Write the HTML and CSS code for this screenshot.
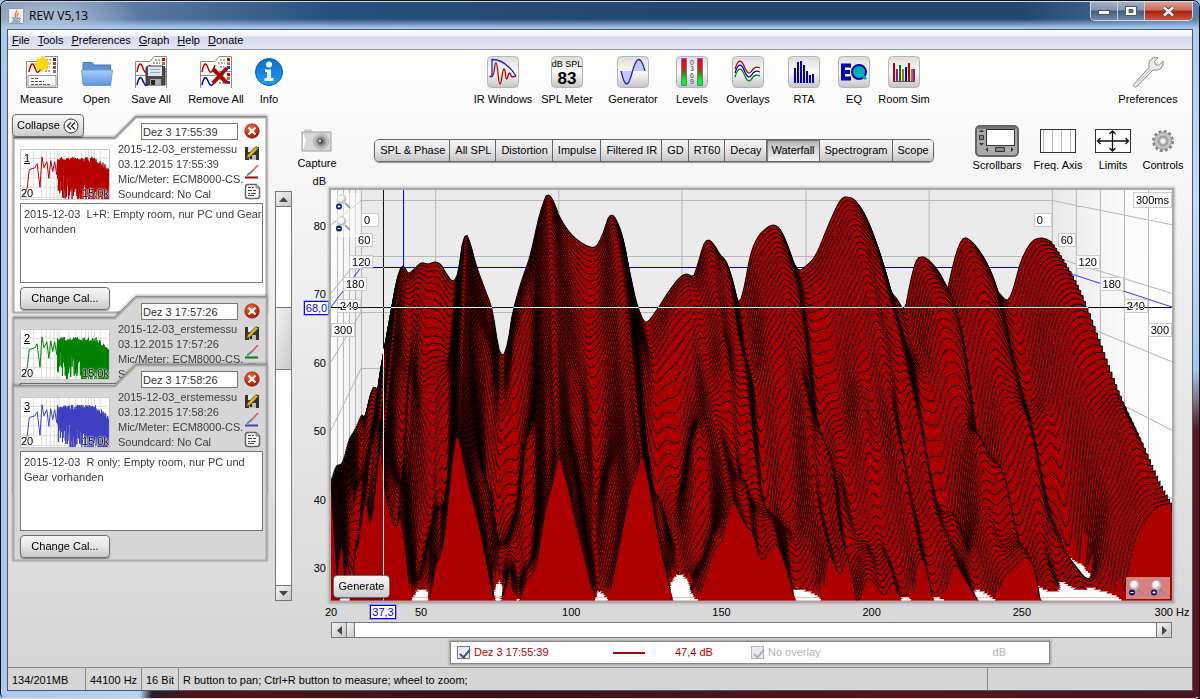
FILE: index.html
```html
<!DOCTYPE html>
<html lang="en">
<head>
  <meta charset="UTF-8">
  <meta name="viewport" content="width=device-width, initial-scale=1.0">
  <title>REW V5,13</title>
  <link rel="stylesheet" href="styles.css">
</head>
<body>
  <!-- shared icons -->
  <svg class="defs" width="0" height="0">
    <defs>
      <linearGradient id="tile" x1="0" y1="0" x2="0" y2="1">
        <stop offset="0" stop-color="#dcdcdc"/><stop offset="0.5" stop-color="#fafafa"/><stop offset="1" stop-color="#c4c4c4"/>
      </linearGradient>
      <linearGradient id="level" x1="0" y1="0" x2="0" y2="1">
        <stop offset="0.2" stop-color="#f00"/><stop offset="0.5" stop-color="#7a5a00"/><stop offset="0.8" stop-color="#0f0"/>
      </linearGradient>
      <linearGradient id="folder" x1="0" y1="0" x2="0" y2="1">
        <stop offset="0" stop-color="#a9cdfb"/><stop offset="1" stop-color="#5d95dd"/>
      </linearGradient>
      <linearGradient id="blueball" x1="0" y1="0" x2="0" y2="1">
        <stop offset="0" stop-color="#0d6fc8"/><stop offset="1" stop-color="#1e9bf5"/>
      </linearGradient>
      <radialGradient id="redball" cx="0.4" cy="0.3" r="0.8">
        <stop offset="0" stop-color="#f0703c"/><stop offset="0.6" stop-color="#cc2a12"/><stop offset="1" stop-color="#8c1006"/>
      </radialGradient>
      <radialGradient id="lens">
        <stop offset="0" stop-color="#222"/><stop offset="0.35" stop-color="#777"/><stop offset="0.6" stop-color="#999"/><stop offset="1" stop-color="#ddd"/>
      </radialGradient>
      <radialGradient id="glass" cx="0.4" cy="0.4">
        <stop offset="0" stop-color="#fff"/><stop offset="0.7" stop-color="#eee"/><stop offset="1" stop-color="#bbb"/>
      </radialGradient>
      <linearGradient id="leftwall"><stop offset="0" stop-color="#fff"/><stop offset="1" stop-color="#ececec"/></linearGradient>
      <linearGradient id="rightwall"><stop offset="0" stop-color="#e9e9e9"/><stop offset="0.6" stop-color="#fafafa"/><stop offset="1" stop-color="#fff"/></linearGradient>
    </defs>
    <symbol id="icon-sheet" viewBox="0 0 32 32">
      <path d="M.5 31.500V5.500H15L19 .5H31.500V31.500Z" fill="#fff" stroke="#8a8a8a"/>
      <path d="M3 16C5 6 7 6 9 12S13 18 16 9" fill="none" stroke="#c00000" stroke-width="1.500"/>
      <path d="M20 4H25M18 7H25M20 11H24M19 15H25" stroke="#555" stroke-dasharray="2 1"/>
      <path d="M27 2h3v3h-3z" fill="#c00"/><path d="M27 6h3v3h-3z" fill="#654"/><path d="M27 10h3v3h-3z" fill="#c33"/><path d="M27 14h3v3h-3z" fill="#777"/>
    </symbol>
    <symbol id="icon-sheet2" viewBox="0 0 32 32">
      <path d="M.5 32V5.500H15L19 .5H31.500V32M.5 19.500H15L19 15.500H31" fill="#fff" stroke="#8a8a8a"/>
      <path d="M2 16C4 6 6 6 8 12S12 18 15 9" fill="none" stroke="#c00000" stroke-width="1.500"/>
      <path d="M2 29C4 20 6 20 8 25S12 32 15 24" fill="none" stroke="#0000b4" stroke-width="1.500"/>
      <path d="M20 4H25M18 7H25M20 11H24M19 19H25M19 23H25M19 27H25" stroke="#555" stroke-dasharray="2 1"/>
      <path d="M27 2h3v3h-3zM27 17h3v3h-3z" fill="#c00"/><path d="M27 6h3v3h-3zM27 21h3v3h-3z" fill="#b70"/><path d="M27 10h3v3h-3zM27 25h3v3h-3z" fill="#33c"/>
    </symbol>
    <symbol id="icon-close" viewBox="0 0 16 16">
      <circle cx="8" cy="8" r="7.300" fill="url(#redball)" stroke="#8e2a1c" stroke-width=".6"/>
      <path d="M5.200 5.200 10.800 10.800M10.800 5.200 5.200 10.800" stroke="#fff" stroke-width="2.200" stroke-linecap="round"/>
    </symbol>
    <symbol id="icon-saveedit" viewBox="0 0 16 16">
      <path d="M1 2H15V15H1Z" fill="#333"/><path d="M4 2H12V7H4Z" fill="#dfe6ea"/><path d="M5 10H12V15H5Z" fill="#bbb"/><path d="M6 11H8V14H6Z" fill="#222"/>
      <path d="M2.500 13.500 3.500 10 12 1.500 14.300 3.500 6 12Z" fill="#e3b420" stroke="#4a3a08" stroke-width=".8"/>
    </symbol>
    <symbol id="icon-pen" viewBox="0 0 16 16">
      <path d="M14 1 8 7.500" stroke="#e0574f" stroke-width="1.600"/><path d="M8.500 7 3 11.500" stroke="#6d7f96" stroke-width="1.800"/><path d="M1 13.500H14" stroke="currentColor" stroke-width="2"/>
    </symbol>
    <symbol id="icon-note" viewBox="0 0 17 17">
      <path d="M4 1.500H12L15.500 5V13Q15.500 15.500 13 15.500H4Q1.500 15.500 1.500 13V4Q1.500 1.500 4 1.500Z" fill="#fff" stroke="#666" stroke-width="1.500"/>
      <path d="M12 1.500V5H15.500" fill="#bbb" stroke="#777"/><path d="M4 4.500H7M8 4.500H10M4 7.500H8M9 7.500H12M4 10.500H6M7 10.500H12M4 12.500H10" stroke="#444"/>
    </symbol>
    <symbol id="icon-zoomin" viewBox="0 0 16 16">
      <path d="M9 9 14 14" stroke="#8a8a8a" stroke-width="1.500"/><circle cx="5.500" cy="5" r="4.500" fill="url(#glass)" stroke="#c4c4c4" stroke-width=".6"/>
      <circle cx="3" cy="12.500" r="3" fill="#002080"/><path d="M1.500 12.500H4.500M3 11V14" stroke="#fff"/>
    </symbol>
    <symbol id="icon-zoomout" viewBox="0 0 16 16">
      <path d="M9 9 14 14" stroke="#8a8a8a" stroke-width="1.500"/><circle cx="5.500" cy="5" r="4.500" fill="url(#glass)" stroke="#c4c4c4" stroke-width=".6"/>
      <circle cx="3" cy="12.500" r="3" fill="#002080"/><path d="M1.500 12.500H4.500" stroke="#fff"/>
    </symbol>
    <symbol id="card-shape" viewBox="0 0 256 198">
      <path d="M1.500 196.500V22.500H103L124 1.500H254.500V196.500Z" fill="currentColor" stroke="#aaa" stroke-width="2"/>
      <path d="M1 21.500H102.500L123.500 .5H255" fill="none" stroke="#8f8f8f" stroke-width="1"/>
    </symbol>
  </svg>

  <header class="titlebar">
    <svg class="java" width="16" height="16" viewBox="0 0 16 16"><rect x=".5" y=".5" width="15" height="15" rx="1" fill="#eceff2" stroke="#8d99a5"/><path d="M8 9C5 6.500 9.500 5 8.500 2M9.500 8.500C8 7 10 6 11 5" fill="none" stroke="#f07818" stroke-width="1.300"/><path d="M4 10H11.500M5 12H10.500M3.500 14H12M11.500 10Q14 10 11 12" fill="none" stroke="#4a7290"/></svg>
    <span class="title">REW V5,13</span>
    <div class="window-buttons">
      <button class="min" aria-label="Minimize"><svg width="12" height="10"><rect x=".5" y="4.500" width="11" height="4" fill="#fff" stroke="#555"/></svg></button>
      <button class="max" aria-label="Maximize"><svg width="12" height="10"><path d="M.5.5H11.500V9.500H.5ZM4 3.500V6.500H8V3.500Z" fill="#fff" fill-rule="evenodd" stroke="#555"/></svg></button>
      <button class="exit" aria-label="Close"><svg width="13" height="11"><path d="M2 1.500 11 9.500M11 1.500 2 9.500" stroke="#5a3030" stroke-width="4"/><path d="M2 1.500 11 9.500M11 1.500 2 9.500" stroke="#fff" stroke-width="2.500"/></svg></button>
    </div>
  </header>

  <main class="client">
    <nav class="menubar">
      <a href="#"><u>F</u>ile</a>
      <a href="#"><u>T</u>ools</a>
      <a href="#"><u>P</u>references</a>
      <a href="#"><u>G</u>raph</a>
      <a href="#"><u>H</u>elp</a>
      <a href="#"><u>D</u>onate</a>
    </nav>

    <div class="toolbar">
      <div class="group file-group">
        <button class="tool"><svg width="32" height="32"><use href="#icon-sheet"/><path d="M2 19.500H30V30H2Z" fill="#fff" stroke="#999"/><path d="M5 22.500H12M5 25.500H18M5 28.500H25" stroke="#555" stroke-dasharray="3 1"/><circle cx="16" cy="8" r="6" fill="#ffd800"/><path d="M16 0V16M8 8H24M10.500 2.500 21.500 13.500M21.500 2.500 10.500 13.500" stroke="#ffd800" stroke-width="2"/></svg>Measure</button>
        <button class="tool"><svg width="34" height="32" viewBox="0 0 34 32"><path d="M3 28V6.500H12L14 9H30.500V28Z" fill="#5f92cf" stroke="#4679b8"/><path d="M1.500 14H32.500L30.500 29.500H3.500Z" fill="url(#folder)" stroke="#6f9fdd"/></svg>Open</button>
        <button class="tool"><svg width="32" height="32"><use href="#icon-sheet2"/><path d="M11 11.500 13 10H28L30 12V29H11Z" fill="#4a4a4a" stroke="#333"/><path d="M13 10.500H27V20H13Z" fill="#dce8ef"/><path d="M15 13.500H25M15 16.500H25" stroke="#9ab"/><path d="M15 23H26V29H15Z" fill="#aaa"/><path d="M16 24H20V29H16Z" fill="#222"/></svg>Save All</button>
        <button class="tool"><svg width="32" height="32"><use href="#icon-sheet2"/><path d="M13 13 27 27M27 12 13 27" stroke="#a80808" stroke-width="4"/></svg>Remove All</button>
        <button class="tool"><svg width="32" height="32"><circle cx="16" cy="16" r="13.500" fill="url(#blueball)" stroke="#0b5fae"/><circle cx="16" cy="8.500" r="3" fill="#fff"/><path d="M12 13.500H18V22H20.500V25H11.500V22H14V16H12Z" fill="#fff"/></svg>Info</button>
      </div>
      <div class="group main-group">
        <button class="tool"><svg width="32" height="32"><rect class="tile" x=".5" y=".5" width="31" height="31" rx="4"/><path d="M2.500 20.500H5V3.500C15 3.500 22 9 29 20" fill="none" stroke="#2020c0" stroke-width="1.300"/><path d="M5 20C8 20 7 7 9 7S11 28 13 28 15 13 17 13 18 23 19.500 23 21 17 22.500 17 24 21 25 21L29 20" fill="none" stroke="#b00000" stroke-width="1.300"/></svg>IR Windows</button>
        <button class="tool"><svg width="32" height="32"><rect class="tile" x=".5" y=".5" width="31" height="31" rx="4"/><text x="16" y="11" class="spl-unit">dB SPL</text><text x="16" y="28" class="spl-value">83</text></svg>SPL Meter</button>
        <button class="tool"><svg width="32" height="32"><rect class="tile" x=".5" y=".5" width="31" height="31" rx="4"/><path d="M4 15C8 32 11 32 15 17S23-3 28 15Z" fill="#c4c8ff"/><path d="M4 15C8 32 11 32 15 17S23-3 28 15" fill="none" stroke="#2020c0" stroke-width="1.300"/></svg>Generator</button>
        <button class="tool"><svg width="32" height="32"><rect class="tile" x=".5" y=".5" width="31" height="31" rx="4"/><path d="M5.500 2.500H10.500V29.500H5.500ZM21.500 2.500H26.500V29.500H21.500Z" fill="url(#level)" stroke="#66d"/><g class="digits"><text x="16" y="9">0</text><text x="16" y="15">3</text><text x="16" y="22">6</text><text x="16" y="28">9</text></g></svg>Levels</button>
        <button class="tool"><svg width="32" height="32"><rect class="tile" x=".5" y=".5" width="31" height="31" rx="4"/><g fill="none" stroke-width="1.300"><path d="M3 13C6 3 9 3 12 10S17 20 21 13Q24 10 28 12" stroke="#b00000"/><path d="M3 17C6 7 9 7 12 14S17 24 21 17Q24 14 28 16" stroke="#0000c0"/><path d="M3 21C6 11 9 11 12 18S17 28 21 21Q24 18 28 20" stroke="#008000"/></g></svg>Overlays</button>
        <button class="tool"><svg width="32" height="32"><rect class="tile" x=".5" y=".5" width="31" height="31" rx="4"/><path d="M7 27V12M10 27V6M13 27V5M16 27V9M19 27V15M22 27V19M25 27V18" stroke="#0000b4" stroke-width="2"/></svg>RTA</button>
        <button class="tool"><svg width="32" height="32"><rect class="tile" x=".5" y=".5" width="31" height="31" rx="4"/><path d="M13 9.500H5V22.500H13M5 16H12" fill="none" stroke="#0000b4" stroke-width="4"/><circle cx="21" cy="16" r="7" fill="#00b0b0" stroke="#0000b4" stroke-width="2"/><path d="M22 17 28 23" stroke="#00b0b0" stroke-width="3"/></svg>EQ</button>
        <button class="tool"><svg width="32" height="32"><rect class="tile" x=".5" y=".5" width="31" height="31" rx="4"/><g stroke-width="2"><path d="M6 25V7M21 25V7" stroke="#b00000"/><path d="M9 25V13M26 25V13" stroke="#b000b0"/><path d="M12 25V9" stroke="#008000"/><path d="M15 25V13M24 25V13" stroke="#a08000"/><path d="M18 25V11" stroke="#0000c0"/></g><path d="M5 25.500H27" stroke="#555"/></svg>Room Sim</button>
      </div>
      <div class="group pref-group">
        <button class="tool"><svg width="32" height="32"><path d="M2 28 17 11.500Q16 5 20 2.500 23 .5 26 1.500L22.500 5.500 24 9 27.500 9 31 5Q32 9 29 12.500 26 15 21 14L5.500 30Q3.500 32 2 30.500 .5 29.500 2 28Z" fill="#e8e8e8" stroke="#8c8c8c"/><path d="M6 26 19 13" stroke="#bbb"/></svg>Preferences</button>
      </div>
    </div>

    <div class="workspace">
      <aside class="sidebar">
        <div class="measurements">
          <button class="btn collapse">Collapse <svg width="16" height="16"><circle cx="8" cy="8" r="7" fill="#fff" stroke="#333"/><path d="M8 4.500 4.500 8 8 11.500M12 4.500 8.500 8 12 11.500" fill="none" stroke="#222" stroke-width="1.300"/></svg></button>

          <section class="card selected red">
            <svg class="shape" viewBox="0 0 256 198"><use href="#card-shape"/></svg>
            <div class="card-head">
              <input class="name" type="text" value="Dez 3 17:55:39" aria-label="Measurement 1 name">
              <button class="icon" aria-label="Remove"><svg width="16" height="16"><use href="#icon-close"/></svg></button>
            </div>
            <div class="card-body">
              <div class="thumb"><svg viewBox="0 0 89 50"></svg><u>1</u><span>20</span><span>15,0k</span></div>
              <p>2015-12-03_erstemessu<br>03.12.2015 17:55:39<br>Mic/Meter: ECM8000-CS.<br>Soundcard: No Cal</p>
              <div class="card-icons">
                <button class="icon" aria-label="Save"><svg width="16" height="16"><use href="#icon-saveedit"/></svg></button>
                <button class="icon pen" aria-label="Trace colour"><svg width="16" height="16"><use href="#icon-pen"/></svg></button>
                <button class="icon" aria-label="Notes"><svg width="17" height="17"><use href="#icon-note"/></svg></button>
              </div>
            </div>
            <textarea aria-label="Notes 1">2015-12-03  L+R: Empty room, nur PC und Gear vorhanden</textarea>
            <button class="btn cal">Change Cal...</button>
          </section>

          <section class="card green">
            <svg class="shape" viewBox="0 0 256 198"><use href="#card-shape"/></svg>
            <div class="card-head">
              <input class="name" type="text" value="Dez 3 17:57:26" aria-label="Measurement 2 name">
              <button class="icon" aria-label="Remove"><svg width="16" height="16"><use href="#icon-close"/></svg></button>
            </div>
            <div class="card-body">
              <div class="thumb"><svg viewBox="0 0 89 50"></svg><u>2</u><span>20</span><span>15,0k</span></div>
              <p>2015-12-03_erstemessu<br>03.12.2015 17:57:26<br>Mic/Meter: ECM8000-CS.<br>Soundcard: No Cal</p>
              <div class="card-icons">
                <button class="icon" aria-label="Save"><svg width="16" height="16"><use href="#icon-saveedit"/></svg></button>
                <button class="icon pen" aria-label="Trace colour"><svg width="16" height="16"><use href="#icon-pen"/></svg></button>
                <button class="icon" aria-label="Notes"><svg width="17" height="17"><use href="#icon-note"/></svg></button>
              </div>
            </div>
            <textarea aria-label="Notes 2"></textarea>
          </section>

          <section class="card blue">
            <svg class="shape" viewBox="0 0 256 198"><use href="#card-shape"/></svg>
            <div class="card-head">
              <input class="name" type="text" value="Dez 3 17:58:26" aria-label="Measurement 3 name">
              <button class="icon" aria-label="Remove"><svg width="16" height="16"><use href="#icon-close"/></svg></button>
            </div>
            <div class="card-body">
              <div class="thumb"><svg viewBox="0 0 89 50"></svg><u>3</u><span>20</span><span>15,0k</span></div>
              <p>2015-12-03_erstemessu<br>03.12.2015 17:58:26<br>Mic/Meter: ECM8000-CS.<br>Soundcard: No Cal</p>
              <div class="card-icons">
                <button class="icon" aria-label="Save"><svg width="16" height="16"><use href="#icon-saveedit"/></svg></button>
                <button class="icon pen" aria-label="Trace colour"><svg width="16" height="16"><use href="#icon-pen"/></svg></button>
                <button class="icon" aria-label="Notes"><svg width="17" height="17"><use href="#icon-note"/></svg></button>
              </div>
            </div>
            <textarea aria-label="Notes 3">2015-12-03  R only: Empty room, nur PC und Gear vorhanden</textarea>
            <button class="btn cal">Change Cal...</button>
          </section>
        </div>

        <div class="scrollbar vertical">
          <button aria-label="Scroll up"><svg width="9" height="5"><path d="M0 5 4.500 0 9 5Z" fill="#444"/></svg></button>
          <div class="handle"></div>
          <button aria-label="Scroll down"><svg width="9" height="5"><path d="M0 0 4.500 5 9 0Z" fill="#444"/></svg></button>
        </div>
      </aside>

      <section class="graph">
        <div class="graph-bar">
          <button class="tool capture"><svg width="32" height="24"><path d="M4 1H10V4H4Z" fill="#ddd" stroke="#bbb"/><rect x="1" y="3" width="29" height="19" fill="#d8d8d8" stroke="#a0a0a0"/><path d="M2 4 5 12 2 21" fill="#fff"/><circle cx="20" cy="12.500" r="7.500" fill="url(#lens)" stroke="#aaa"/><circle cx="19" cy="12" r="1" fill="#fff"/></svg>Capture</button>
          <div class="tabs">
            <button>SPL &amp; Phase</button><button>All SPL</button><button>Distortion</button><button>Impulse</button><button>Filtered IR</button><button>GD</button><button>RT60</button><button>Decay</button><button class="active">Waterfall</button><button>Spectrogram</button><button>Scope</button>
          </div>
          <div class="group view-group">
            <button class="tool"><svg width="44" height="32"><rect x="1" y="1" width="42" height="30" rx="4" fill="#aaa" stroke="#666" stroke-width="2"/><path d="M3 3H41" stroke="#777" stroke-width="2"/><rect x="11.500" y="4.500" width="28" height="16" fill="#fff" stroke="#333"/><path d="M4 7 6.500 4.500 9 7ZM4 18 6.500 20.500 9 18ZM13 22V27L10.500 24.500ZM36 22V27L38.500 24.500Z" fill="#333"/><path d="M4.500 10.500H8.500V14.500H4.500ZM20.500 22.500H29.500V26.500H20.500Z" fill="#888" stroke="#333"/></svg>Scrollbars</button>
            <button class="tool"><svg width="36" height="32"><rect x=".5" y="4.500" width="35" height="23" fill="#fff" stroke="#333"/><path d="M3.500 5V27M12.500 5V27M21.500 5V27M30.500 5V27" stroke="#bbb"/></svg>Freq. Axis</button>
            <button class="tool"><svg width="36" height="32"><rect x=".5" y="4.500" width="35" height="23" fill="#fff" stroke="#333"/><path d="M2.500 16H33.500M17.500 6V26M5.500 13 2.500 16 5.500 19M30.500 13 33.500 16 30.500 19M14.500 9 17.500 6 20.500 9M14.500 23 17.500 26 20.500 23" fill="none" stroke="#111" stroke-width="1.300"/></svg>Limits</button>
            <button class="tool"><svg width="32" height="32"><circle cx="16" cy="16" r="9.500" fill="none" stroke="#888" stroke-width="3" stroke-dasharray="3 2"/><circle cx="16" cy="16" r="8.500" fill="#c4c4c4" stroke="#999"/><circle cx="16" cy="16" r="5" fill="#a8a8a8" stroke="#999"/><circle cx="16" cy="16" r="2.500" fill="#f6f6f6" stroke="#ddd"/></svg>Controls</button>
          </div>
        </div>

        <div class="chart">
          <div class="unit">dB</div>
          <div class="y-axis"><span>80</span><span>70</span><span>60</span><span>50</span><span>40</span><span>30</span><b class="y-cursor">68,0</b></div>
          <div class="plot" id="plot">
            <svg class="waterfall" id="waterfall" viewBox="331 190 840 411" preserveAspectRatio="none"></svg>
            <span class="range">300ms</span>
            <div class="zoom-v"><button class="icon" aria-label="Zoom in"><svg width="16" height="16"><use href="#icon-zoomin"/></svg></button><button class="icon" aria-label="Zoom out"><svg width="16" height="16"><use href="#icon-zoomout"/></svg></button></div>
            <div class="zoom-h"><button class="icon" aria-label="Zoom out"><svg width="16" height="16"><use href="#icon-zoomout"/></svg></button><button class="icon" aria-label="Zoom in"><svg width="16" height="16"><use href="#icon-zoomin"/></svg></button></div>
            <i class="cross-h"></i><i class="cross-v"></i>
            <button class="btn generate">Generate</button>
          </div>
          <div class="x-axis"><span>20</span><span>50</span><span>100</span><span>150</span><span>200</span><span>250</span><span>300 Hz</span><b class="x-cursor">37,3</b></div>
          <div class="scrollbar horizontal">
            <button aria-label="Scroll left"><svg width="5" height="9"><path d="M5 0 0 4.500 5 9Z" fill="#444"/></svg></button>
            <div class="handle"></div>
            <button aria-label="Scroll right"><svg width="5" height="9"><path d="M0 0 5 4.500 0 9Z" fill="#444"/></svg></button>
          </div>
        </div>

        <div class="legend">
          <label class="trace"><input type="checkbox" checked>Dez 3 17:55:39</label>
          <i class="swatch"></i>
          <span class="value">47,4 dB</span>
          <label class="off"><input type="checkbox" checked disabled>No overlay</label>
          <span class="off-unit">dB</span>
        </div>
      </section>
    </div>

    <footer class="statusbar">
      <span class="mem">134/201MB</span>
      <span class="rate">44100 Hz</span>
      <span class="bits">16 Bit</span>
      <span class="hint">R button to pan; Ctrl+R button to measure; wheel to zoom;</span>
      <span class="end"></span>
    </footer>
  </main>
  <script src="waterfall.js"></script>
</body>
</html>
```
FILE: styles.css
```css
* {
  box-sizing: border-box;
}

body {
  margin: 0;
  min-height: 100vh;
  display: flex;
  flex-direction: column;
  padding: 0 6px 7px;
  font-family: "Liberation Sans", Arial, sans-serif;
  font-size: 11px;
  line-height: 15px;
  color: #000;
  border: 1px solid #111;
  border-bottom-color: #e8d8d8;
  border-radius: 7px 7px 6px 6px;
  background:
    linear-gradient(to right, #a9c9ee 0, #b5d3f4 140px, #2a1a28 152px, #55121c 200px, #3a1018 500px, #5a1420 900px, #4a1420 100%) bottom / 100% 8px no-repeat,
    linear-gradient(to bottom, #a9c9ee 0, #c4dcf4 200px, #a4c8ee 370px, #5a1820 430px, #5a1420 100%) right / 7px 100% no-repeat,
    #a9c9ee;
}

button {
  font: inherit;
  color: inherit;
  margin: 0;
  padding: 0;
  border: 0;
  background: none;
}

.defs {
  position: absolute;
}

/* title bar */
.titlebar {
  height: 28px;
  flex: none;
  margin: 0 -6px;
  display: flex;
  align-items: center;
  padding-left: 7px;
  border-radius: 6px 6px 0 0;
  background:
    radial-gradient(ellipse 90px 30px at 50px 14px, rgba(190, 205, 225, 0.8), transparent),
    linear-gradient(to bottom, transparent 17px, #a9c9ee 26px),
    linear-gradient(to right, #7d93b0 0, #5f7fa8 110px, #28507c 330px, #22466e 60%, #22466e 85%, #5a80ac 100%);
  border-top: 1px solid #cfdcec;
}

.title {
  font-family: "Open Sans", "Noto Sans", sans-serif;
  font-size: 12px;
  margin-left: 5px;
  flex: 1;
}

.window-buttons {
  display: flex;
  align-self: flex-start;
  margin-right: 6px;
  border: 1px solid #d0dbe8;
  border-top: 0;
  border-radius: 0 0 5px 5px;
  overflow: hidden;
}

.window-buttons button {
  height: 18px;
  width: 27px;
  border-right: 1px solid #c4d0de;
  background: linear-gradient(to bottom, #a3b3c6 0, #8295ad 45%, #405a7a 50%, #6f88a6 100%);
}

.window-buttons .exit {
  width: 47px;
  border: 0;
  background: linear-gradient(to bottom, #dba196 0, #cc6a58 45%, #a8200c 50%, #c8563e 100%);
}

.window-buttons svg {
  display: block;
  margin: 0 auto;
}

/* client area */
.client {
  flex: 1;
  display: flex;
  flex-direction: column;
  border: 1px solid #4b5a6b;
  background: linear-gradient(to bottom, #fff 0, #fbfbfb 80px, #d8d8d8 90%, #d6d6d6 100%);
}

.menubar {
  display: flex;
  gap: 8px;
  height: 20px;
  padding: 2px 4px;
  border-bottom: 1px solid #9a9aa2;
  background: linear-gradient(to bottom, #fff 0, #f0f3fa 6px, #d5dbed 7px, #e2e7f5 100%);
}

.menubar a {
  color: #000;
  text-decoration: none;
  line-height: 17px;
}

.toolbar {
  display: flex;
  justify-content: space-between;
  height: 62px;
  padding: 6px 11px 0 5px;
}

.group {
  display: grid;
  align-items: start;
}

.file-group {
  grid-template-columns: 57px 53px 56px 74px 32px;
}

.main-group {
  grid-template-columns: 64px 64px 68px 50px 62px 50px 50px 50px;
}

.pref-group {
  grid-template-columns: 66px;
}

.view-group {
  grid-template-columns: 62px 60px 50px 50px;
}

.tool {
  display: flex;
  flex-direction: column;
  align-items: center;
  gap: 4px;
  white-space: nowrap;
}

.tile {
  fill: url(#tile);
  stroke: #b4b4b4;
}

.spl-unit {
  font-size: 9px;
  text-anchor: middle;
}

.spl-value {
  font-size: 17px;
  font-weight: bold;
  text-anchor: middle;
}

.digits {
  font-size: 7px;
  text-anchor: middle;
  fill: #444;
}

.workspace {
  flex: 1;
  display: grid;
  grid-template-columns: 284px 1fr;
}

.btn {
  height: 23px;
  border: 1px solid #6d6d6d;
  border-radius: 4px;
  background: linear-gradient(to bottom, #f6f6f6, #e6e6e6 50%, #c9c9c9);
  box-shadow: 0 1px 1px rgba(0, 0, 0, 0.4);
}

.icon {
  display: block;
  height: 16px;
}

.icon svg {
  display: block;
}

/* measurement list */
.sidebar {
  display: flex;
  justify-content: space-between;
  padding: 2px 0 0 4px;
}

.measurements {
  position: relative;
  z-index: 0;
}

.collapse {
  display: flex;
  align-items: center;
  justify-content: space-between;
  width: 72px;
  padding: 0 4px;
  margin-bottom: -21px;
}

.card {
  position: relative;
  width: 256px;
  height: 198px;
  padding: 7px 8px 0;
  color: #d6d6d6;
  filter: drop-shadow(0 -1px 1px rgba(0, 0, 0, 0.3));
}

.card.selected {
  color: #fff;
  margin-bottom: -18px;
  z-index: -1;
}

.card.green {
  margin-bottom: -130px;
}

.shape {
  position: absolute;
  inset: 0;
  width: 100%;
  height: 100%;
}

.card-head {
  position: relative;
  display: flex;
  justify-content: flex-end;
  gap: 6px;
}

.name {
  width: 97px;
  height: 17px;
  padding: 0 1px;
  border: 1px solid #777;
  font: inherit;
  color: #333;
}

.card-body {
  position: relative;
  display: grid;
  grid-template-columns: 90px 134px 17px;
  margin-top: 2px;
  height: 61px;
  color: #3c3c3c;
}

.card-body p {
  margin: 0;
  padding-left: 8px;
  white-space: nowrap;
}

.thumb {
  position: relative;
  width: 90px;
  height: 51px;
  margin-top: 7px;
  border: 1px solid #c8c8c8;
  background: #fff;
  color: #000;
}

.thumb svg {
  display: block;
  width: 100%;
  height: 100%;
}

.thumb u,
.thumb span {
  position: absolute;
  bottom: -2px;
  left: 0;
  text-shadow: 0 0 1px #fff, 0 0 2px #fff, 0 0 2px #fff;
}

.thumb u {
  top: 1px;
  left: 3px;
}

.thumb span:last-child {
  left: auto;
  right: 0;
}

.thumb path {
  fill: none;
  stroke: currentColor;
}

.red .thumb svg, .red .pen {
  color: #b40000;
}

.green .thumb svg, .green .pen {
  color: #008000;
}

.blue .thumb svg, .blue .pen {
  color: #4040c0;
}

.card-icons {
  display: flex;
  flex-direction: column;
  gap: 3px;
  padding-top: 3px;
}

textarea {
  position: relative;
  display: block;
  width: 243px;
  height: 80px;
  padding: 3px 0 3px 3px;
  margin: 0 0 4px;
  border: 1px solid #777;
  resize: none;
  overflow: hidden;
  font: inherit;
  color: #3c3c3c;
}

.cal {
  position: relative;
  display: block;
  width: 90px;
  color: #000;
}

/* scrollbars */
.scrollbar {
  display: flex;
  border: 1px solid #777;
  background: #fff;
}

.scrollbar button,
.handle {
  flex: none;
  display: flex;
  align-items: center;
  justify-content: center;
  background: linear-gradient(to bottom right, #f4f4f4, #c8c8c8);
}

.vertical {
  flex-direction: column;
  width: 17px;
  margin: 77px 0 66px;
}

.vertical button {
  height: 15px;
  border-bottom: 1px solid #777;
}

.vertical button:last-child {
  border-top: 1px solid #777;
  border-bottom: 0;
  margin-top: auto;
}

.vertical .handle {
  height: 63px;
  margin-top: 100px;
  border: solid #777;
  border-width: 1px 0;
}

.horizontal {
  grid-column: 2;
  grid-row: 4;
}

.horizontal button {
  width: 15px;
  border-right: 1px solid #777;
}

.horizontal button:last-child {
  border-left: 1px solid #777;
  border-right: 0;
  margin-left: auto;
}

.horizontal .handle {
  width: 8px;
  border-right: 1px solid #777;
}

/* graph */
.graph {
  display: flex;
  flex-direction: column;
}

.graph-bar {
  display: flex;
  justify-content: space-between;
  align-items: flex-start;
  height: 62px;
  padding: 13px 4px 0 0;
}

.graph-bar .tool {
  gap: 1px;
}

.graph-bar .capture {
  width: 50px;
  padding-top: 4px;
  gap: 3px;
}

.tabs {
  display: flex;
  height: 23px;
  margin-top: 14px;
  border: 1px solid #666;
  border-radius: 5px;
  overflow: hidden;
  box-shadow: 0 1px 1px rgba(0, 0, 0, 0.4);
}

.tabs button {
  padding: 0 4px 0 5px;
  border-right: 1px solid #666;
  background: linear-gradient(to bottom, #f6f6f6, #e6e6e6 50%, #c6c6c6);
}

.tabs button:last-child {
  border-right: 0;
}

.tabs .active {
  background: linear-gradient(to bottom, #aaa, #ccc 30%, #f2f2f2);
  box-shadow: inset 1px 1px 1px #777;
}

.chart {
  flex: 1;
  display: grid;
  grid-template-columns: 39px 1fr 20px;
  grid-template-rows: 16px 1fr 21px 16px;
}

.unit {
  padding: 0 5px 0 0;
  text-align: right;
}

.y-axis {
  position: relative;
  grid-column: 1;
  grid-row: 2;
  display: flex;
  flex-direction: column;
  justify-content: space-between;
  padding: 29px 5px 25px 0;
  text-align: right;
}

.y-cursor,
.x-cursor {
  position: absolute;
  border: 1px solid #0000ff;
  outline: 1px solid rgba(0, 0, 255, 0.25);
  background: #fff;
  color: #0000ff;
  font-weight: normal;
  text-align: center;
  line-height: 12px;
}

.y-cursor {
  top: 27%;
  right: 2px;
  width: 25px;
}

.x-cursor {
  left: 39px;
  top: 4px;
  width: 26px;
}

.plot {
  position: relative;
  grid-column: 2;
  grid-row: 2;
  background: #ebebeb;
  box-shadow: 0 0 0 2px #aaa, 0 0 2px 3px #bbb;
  isolation: isolate;
}

.waterfall {
  position: absolute;
  width: 100%;
  height: 100%;
}

.grid-line {
  fill: none;
  stroke: #b8b8b8;
}

.ref-line {
  fill: none;
  stroke: #0000d8;
}

.ref-line.side {
  stroke: #4040ff;
}

.slice {
  fill: #ac0000;
}

.slice-line {
  fill: none;
  stroke: #000;
}

.time,
.range {
  position: absolute;
  min-width: 18px;
  padding: 0 2px;
  border: 1px solid #ccc;
  background: rgba(255, 255, 255, 0.8);
  line-height: 12px;
}

.range {
  top: 2px;
  right: 0;
  line-height: 14px;
}

.zoom-v,
.zoom-h {
  position: absolute;
  display: flex;
  background: rgba(255, 255, 255, 0.5);
}

.zoom-v {
  flex-direction: column;
  gap: 6px;
  top: 3px;
  left: 5px;
  width: 24px;
  height: 44px;
  padding-top: 1px;
}

.zoom-h {
  gap: 6px;
  right: 2px;
  bottom: 2px;
  padding: 3px;
}

.generate {
  position: absolute;
  left: 2px;
  bottom: 3px;
  width: 57px;
}

.cross-h,
.cross-v {
  position: absolute;
  background: #fff;
  mix-blend-mode: difference;
}

.cross-h {
  left: 0;
  right: 0;
  top: 28.5%;
  height: 1px;
}

.cross-v {
  top: 0;
  bottom: 0;
  left: 6.2%;
  width: 1px;
}

.x-axis {
  position: relative;
  grid-column: 2;
  grid-row: 3;
  display: grid;
  grid-template-columns: 30fr 50fr 50fr 50fr 50fr 50fr 0;
  padding-top: 4px;
}

.x-axis span {
  width: 0;
  display: flex;
  justify-content: center;
  white-space: nowrap;
}

/* legend */
.legend {
  display: flex;
  align-items: center;
  align-self: center;
  width: 598px;
  height: 21px;
  margin: 4px 0 4px 16px;
  padding: 0 6px;
  background: #fff;
  box-shadow: 0 0 0 1px #888, 0 0 2px 2px #999;
}

.legend label {
  display: flex;
  align-items: center;
  gap: 4px;
}

.legend input {
  appearance: none;
  width: 13px;
  height: 13px;
  margin: 0;
  border: 1px solid #777;
  background: #e8ebf0;
  position: relative;
}

.legend input::after {
  content: "";
  position: absolute;
  left: 4px;
  top: 0;
  width: 4px;
  height: 9px;
  border: solid #3a5590;
  border-width: 0 2px 2px 0;
  transform: rotate(40deg);
}

.legend input:disabled,
.legend input:disabled::after {
  border-color: #b4b4b4;
}

.trace,
.value {
  color: #b40000;
}

.trace {
  width: 156px;
}

.swatch {
  width: 32px;
  height: 2px;
  background: #b40000;
}

.value {
  width: 76px;
  margin-left: 30px;
}

.off,
.off-unit {
  color: #b4b4b4;
}

.off-unit {
  margin-left: auto;
  margin-right: 37px;
}

/* status bar */
.statusbar {
  display: flex;
  height: 23px;
  border-top: 1px solid #888;
  line-height: 25px;
}

.statusbar span {
  padding-left: 4px;
  border-right: 1px solid #888;
}

.mem {
  width: 78px;
}

.rate {
  width: 56px;
}

.bits {
  width: 37px;
}

.hint {
  flex: 1;
}

.statusbar .end {
  width: 204px;
  border: 0;
}
```
FILE: waterfall.js
```js
const NS = 'http://www.w3.org/2000/svg';

// Level curve at 0 ms, drawn on the back wall
const BACK = [
  [361, 415], [366, 415], [371, 392], [375, 387], [380, 392], [383, 370], [388, 330], [393, 300], [398, 275],
  [403, 266], [408, 273], [413, 270], [421, 263], [428, 264], [435, 262], [441, 265], [447, 275], [453, 281],
  [458, 272], [462, 245], [466, 235], [470, 243], [476, 265], [485, 290], [492, 310], [497, 340], [500, 353],
  [504, 354], [508, 340], [512, 315], [520, 285], [530, 255], [538, 220], [544, 200], [547, 195], [552, 199],
  [560, 218], [570, 233], [580, 242], [590, 247], [596, 246], [602, 235], [608, 218], [612, 215], [617, 222],
  [623, 240], [630, 275], [637, 305], [645, 322], [655, 312], [668, 292], [680, 277], [687, 274], [693, 276],
  [698, 262], [703, 245], [708, 240], [713, 244], [720, 255], [726, 262], [732, 280], [738, 302], [743, 290],
  [750, 255], [757, 238], [765, 229], [773, 225], [780, 230], [787, 245], [793, 262], [798, 270], [803, 268],
  [815, 255], [830, 220], [840, 200], [846, 197], [855, 201], [866, 218], [876, 245], [884, 270], [890, 290],
  [897, 300], [904, 309], [908, 290], [915, 262], [922, 257], [930, 262], [940, 275], [946, 290], [950, 275],
  [955, 255], [960, 242], [965, 238], [975, 246], [985, 262], [993, 285], [1000, 295], [1007, 300], [1012, 290],
  [1020, 262], [1030, 243], [1041, 238], [1051, 242]
];

// Level curve at 300 ms, drawn at the front
const FRONT = [
  [331, 480], [336, 560], [341, 625], [350, 625], [354, 560], [358, 545], [365, 500], [371, 523], [376, 480],
  [381, 447], [385, 490], [390, 512], [396, 528], [400, 515], [405, 545], [413, 615], [426, 625], [431, 590],
  [436, 563], [441, 553], [446, 520], [451, 470], [457, 433], [462, 455], [470, 490], [480, 530], [490, 580],
  [498, 615], [504, 590], [510, 582], [518, 602], [526, 580], [535, 568], [545, 510], [552, 485], [558, 457],
  [566, 480], [575, 520], [585, 560], [592, 590], [600, 625], [606, 610], [612, 580], [620, 540], [630, 490],
  [636, 475], [641, 455], [648, 480], [655, 520], [663, 560], [670, 590], [679, 625], [690, 620], [704, 580],
  [715, 548], [722, 540], [728, 510], [734, 503], [740, 515], [747, 528], [752, 531], [757, 550], [762, 560],
  [770, 548], [777, 545], [785, 565], [792, 590], [799, 620], [818, 620], [826, 562], [830, 555], [835, 568],
  [840, 574], [847, 557], [852, 580], [857, 602], [862, 588], [867, 578], [875, 585], [884, 595], [893, 582],
  [902, 606], [911, 604], [916, 568], [921, 558], [926, 570], [934, 606], [942, 604], [950, 572], [955, 565],
  [965, 580], [982, 606], [993, 604], [1000, 582], [1012, 568], [1020, 560], [1027, 558], [1034, 570],
  [1044, 620], [1080, 625], [1118, 620], [1124, 585], [1131, 550], [1141, 525], [1156, 507], [1171, 503]
];

const SLICES = 50;
const FLOOR = 25.1;

// x of a frequency and y of a level at depth t (0 = back wall, 1 = front)
function px(hz, t) {
  const left = 361 - 30 * t;
  const right = 1051 + 120 * t;
  return left + (hz - 20) / 280 * (right - left);
}

function py(db, t) {
  return 267.5 + 39.5 * t + (68 - db) * (5.6 + 1.25 * t);
}

function sample(points, x) {
  let i = 0;
  while (i < points.length - 2 && points[i + 1][0] < x) i++;
  const p = k => points[Math.max(0, Math.min(points.length - 1, k))];
  const slope = k => (p(k + 1)[1] - p(k - 1)[1]) / (p(k + 1)[0] - p(k - 1)[0]);
  const [x0, y0] = p(i);
  const [x1, y1] = p(i + 1);
  const w = x1 - x0;
  const u = (x - x0) / w;
  return y0 * (1 + 2 * u) * (1 - u) * (1 - u) + slope(i) * w * u * (1 - u) * (1 - u)
    + y1 * u * u * (3 - 2 * u) + slope(i + 1) * w * u * u * (u - 1);
}

function clamp(v) {
  return Math.max(0, Math.min(1, v));
}

function level(hz, t) {
  const back = 68 - (sample(BACK, px(hz, 0)) - 267.5) / 5.6;
  const front = 68 - (sample(FRONT, px(hz, 1)) - 307) / 6.85;
  const ease = 0.6 * t + 0.4 * t * t * (3 - 2 * t);
  const db = back + (front - back) * ease;
  const mid = Math.sin(Math.PI * t);
  // dips between the modes drop out early and come back in beats
  const valley = clamp((77 - back) / 14) * clamp((hz - 30) / 15) * clamp((44 - front) / 12);
  const beat = 10 * mid * mid + 5 * mid * Math.sin(13 * t + hz * 0.11);
  // ripple in the parts that have already decayed
  const low = clamp((62 - db) / 20) * clamp((46 - front) / 10);
  const ripple = Math.sin(hz * 0.62 + t * 9) + Math.sin(hz * 0.31 - t * 13 + 1);
  return db - valley * beat + ripple * low * 2 * mid;
}

function add(parent, d, className, fill) {
  const path = document.createElementNS(NS, 'path');
  path.setAttribute('d', d);
  if (className) path.setAttribute('class', className);
  if (fill) path.setAttribute('fill', fill);
  parent.appendChild(path);
}

function drawWaterfall() {
  const svg = document.getElementById('waterfall');
  add(svg, 'M331 190H361V507L331 601Z', '', 'url(#leftwall)');
  add(svg, 'M1051 190H1171V601L1051 507Z', '', 'url(#rightwall)');
  add(svg, 'M361 507H1051L1171 601H331Z', '', '#fff');

  let grid = '';
  for (let hz = 50; hz <= 250; hz += 50) grid += `M${Math.round(px(hz, 0)) + 0.5} 190V507`;
  for (let db = 30; db <= 80; db += 10) {
    const y = Math.round(py(db, 0)) + 0.5;
    grid += `M331 ${py(db, 1)}L361 ${y}H1051L1171 ${py(db, 1)}`;
  }
  for (let n = 0; n < 5; n++) grid += `M${361.5 - 6 * n} 190V550M${1051.5 + 24 * n} 190V550`;
  add(svg, grid, 'grid-line');
  add(svg, 'M361 267.5H1051M403.5 190V267', 'ref-line');
  add(svg, 'M331 307L361 267.5M1051 267.5L1171 307', 'ref-line side');

  for (let n = 0; n <= SLICES; n++) {
    const t = n / SLICES;
    const base = py(FLOOR, t);
    let area = `M${px(20, t)} ${base}`;
    let line = '';
    let pen = 'M';
    for (let hz = 20; hz <= 300; hz++) {
      const x = px(hz, t).toFixed(1);
      const y = py(level(hz, t), t);
      area += `L${x} ${Math.min(base, y).toFixed(1)}`;
      if (y < base) {
        line += `${pen}${x} ${y.toFixed(1)}`;
        pen = 'L';
      } else {
        pen = 'M';
      }
    }
    add(svg, area + `V${base}Z`, 'slice');
    add(svg, line + (n % 2 ? 'v7' : 'v10'), 'slice-line');
  }
}

function drawTimes() {
  const plot = document.getElementById('plot');
  const before = plot.querySelector('.range');
  for (let n = 0; n <= 5; n++) {
    const top = (23 + 20 * n + n * n * 0.4) / 411 * 100 + '%';
    ['left', 'right'].forEach(side => {
      const tag = document.createElement('span');
      tag.className = 'time';
      tag.textContent = n * 60;
      tag.style.top = top;
      tag.style[side] = (side === 'left' ? 30 - 6 * n : 120 - 24 * n) / 840 * 100 + '%';
      plot.insertBefore(tag, before);
    });
  }
}

function drawThumbs() {
  document.querySelectorAll('.thumb svg').forEach((svg, k) => {
    let seed = 7 + k * 31;
    const rand = () => (seed = seed * 16807 % 2147483647) / 2147483647;
    for (let i = 0; i < 5; i++) rand();
    let grid = '';
    [12, 20, 25, 29, 33, 36, 38, 48, 55, 61, 65, 68, 71, 74, 80].forEach(x => grid += `M${x}.5 0V50`);
    for (let y = 8; y < 50; y += 10) grid += `M0 ${y}.5H89`;
    add(svg, grid, '');
    svg.lastChild.style.stroke = '#ddd';
    let d = 'M2 48L6 38L8 20L14 18L16 14L19 38L21 7L23 18L26 12L28 29L30 11L32 22L34 12L36 25';
    for (let x = 37; x < 89; x += 0.7) {
      const top = 7 + rand() * 5 + Math.max(0, x - 76) * 0.8;
      const depth = Math.min(50, 20 + (x - 37) * 0.5 + rand() * 28);
      d += `L${x.toFixed(1)} ${top.toFixed(1)}V${depth.toFixed(1)}`;
    }
    add(svg, d, '');
  });
}

drawWaterfall();
drawTimes();
drawThumbs();
```
